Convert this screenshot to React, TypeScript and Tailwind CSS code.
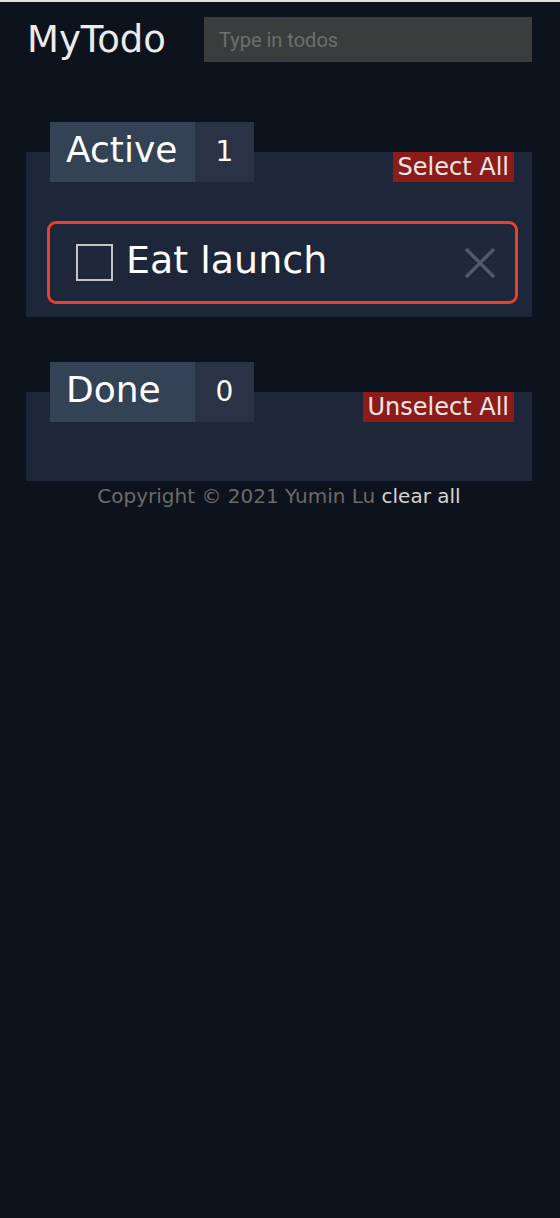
import React from "react";

const font = { fontFamily: '"DejaVu Sans", "Liberation Sans", sans-serif' };

type SectionProps = {
  title: string;
  count: number;
  action: string;
  children?: React.ReactNode;
};

function Section({ title, count, action, children }: SectionProps) {
  return (
    <section className="bg-[#1e263a]">
      <div className="flex items-start justify-between pl-6 pr-[18px]">
        <div className="-mt-[30px] flex h-[60px]">
          <div className="flex w-[145px] items-center bg-[#334355] pb-1 pl-4 text-[36px] text-white">{title}</div>
          <div className="flex w-[59px] items-center justify-center bg-[#2a3245] text-[28px] text-white">
            {count}
          </div>
        </div>
        <button className="h-[30px] bg-[#8b1c1a] px-[5px] text-[24px] leading-[30px] text-[#f0e6e6]">
          {action}
        </button>
      </div>
      {children}
    </section>
  );
}

export default function App() {
  const todos = ["Eat launch"];

  return (
    <div className="min-h-[1218px] border-t-2 border-[#e2e2e2] bg-[#0d131d] pl-[26px] pr-[28px]" style={font}>
      {/* header */}
      <header className="flex items-center pt-[15px]">
        <h1 className="w-[178px] pl-[1px] text-[37px] leading-[45px] text-[#ececec]">MyTodo</h1>
        <input
          className="h-[45px] w-[328px] bg-[#3a3d3c] px-[15px] text-[20px] text-white outline-none placeholder:text-[#6c6f6d]"
          style={{ fontFamily: "Roboto, sans-serif" }}
          placeholder="Type in todos"
        />
      </header>

      <div className="mt-[90px]">
        <Section title="Active" count={todos.length} action="Select All">
          <div className="pb-[13px] pl-[21px] pr-[14px] pt-[39px]">
            {todos.map((t) => (
              <div
                key={t}
                className="flex h-[83px] items-center rounded-[9px] border-[3px] border-[#e8412a] pl-[26px] pr-[19px]"
              >
                <span className="h-[37px] w-[37px] border-2 border-[#c4c4c4]" />
                <span className="ml-[13px] flex-1 pb-1 text-[38px] text-white">{t}</span>
                <svg width="32" height="32" viewBox="0 0 32 32" className="text-[#4d5a6e]">
                  <path d="M2 2 L30 30 M30 2 L2 30" stroke="currentColor" strokeWidth="3.5" />
                </svg>
              </div>
            ))}
          </div>
        </Section>

        <div className="mt-[75px]">
          <Section title="Done" count={0} action="Unselect All">
            <div className="h-[59px]" />
          </Section>
        </div>

        <p className="text-center text-[20px] text-[#6a6a6a]">
          Copyright © 2021 Yumin Lu <span className="text-[#d4d4d4]">clear all</span>
        </p>
      </div>
    </div>
  );
}
